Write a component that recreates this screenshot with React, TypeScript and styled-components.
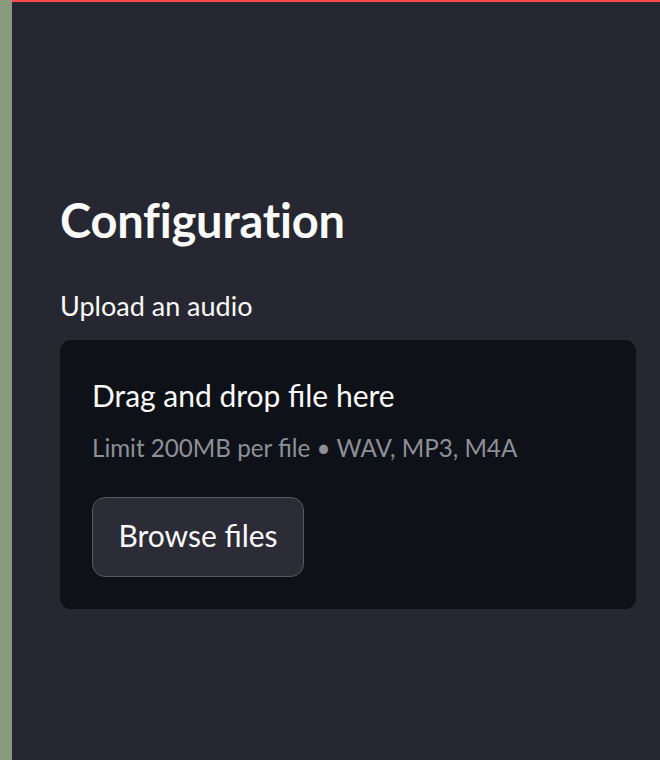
import React from "react";
import styled, { createGlobalStyle } from "styled-components";

const Global = createGlobalStyle`
  html, body { margin: 0; padding: 0; background: #262730; }
  body { font-family: "Source Sans Pro", Lato, "Open Sans", sans-serif; }
`;

const Page = styled.div`
  display: flex;
  height: 760px;
  width: 660px;
  overflow: hidden;
`;

const Strip = styled.div`
  width: 12px;
  flex: none;
  background: #8a9b7d;
`;

const Sidebar = styled.main`
  flex: 1;
  background: #262730;
  border-top: 2px solid #ff4b4b;
  padding: 188px 24px 0 48px;
  box-sizing: border-box;
  color: #fafafa;
`;

const Title = styled.h2`
  margin: 0;
  font-size: 47px;
  font-weight: 700;
  line-height: 60px;
  letter-spacing: -0.2px;
`;

const Label = styled.label`
  display: block;
  margin-top: 38px;
  font-size: 27px;
  line-height: 36px;
`;

const Dropzone = styled.section`
  margin-top: 16px;
  background: #0e1117;
  border-radius: 11px;
  padding: 35px 32px 32px;
  display: flex;
  flex-direction: column;
  align-items: flex-start;
`;

const DropTitle = styled.div`
  font-size: 30px;
  line-height: 40px;
`;

const Limit = styled.div`
  font-size: 24.2px;
  line-height: 32px;
  color: #8e9098;
  margin-top: 17px;
`;

const Button = styled.button`
  margin-top: 33px;
  height: 80px;
  width: 212px;
  background: #2b2c36;
  border: 1.5px solid #575862;
  border-radius: 13px;
  color: #fafafa;
  font-family: inherit;
  font-size: 30px;
  padding: 0 0 4px;
`;

export default function App() {
  return (
    <>
      <Global />
      <Page>
        <Strip />
        <Sidebar>
          <Title>Configuration</Title>
          <Label>Upload an audio</Label>
          <Dropzone>
            <DropTitle>Drag and drop file here</DropTitle>
            <Limit>Limit 200MB per file • WAV, MP3, M4A</Limit>
            <Button>Browse files</Button>
          </Dropzone>
        </Sidebar>
      </Page>
    </>
  );
}
